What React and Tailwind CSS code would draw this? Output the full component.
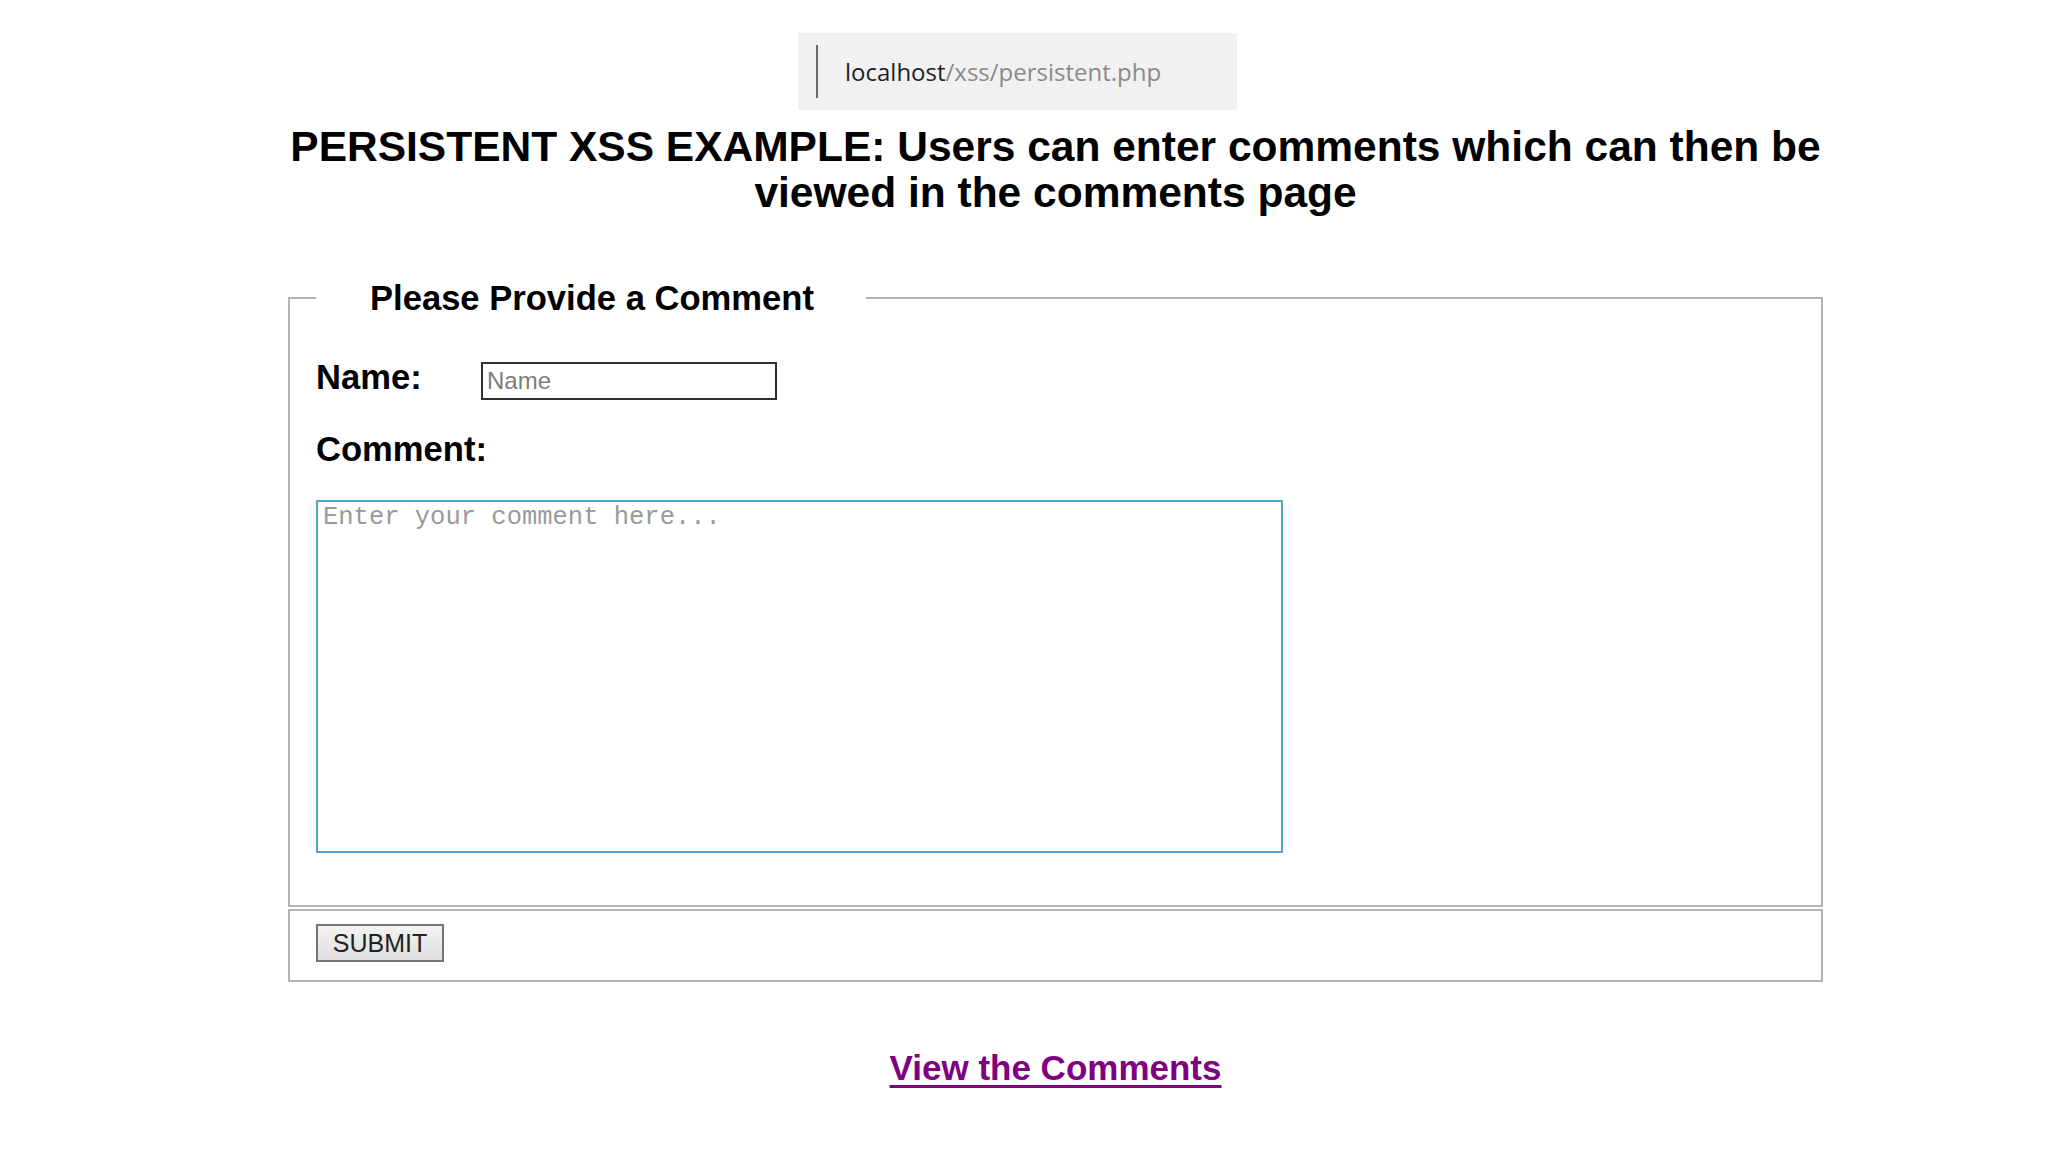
import { useState } from "react";

// Address bar strip shown above the page
const AddressBar = () => (
  <div className="ml-[510px] flex h-[77px] w-[439px] items-center bg-[#f1f1f1] pl-[18px]">
    <div className="h-[53px] w-[2px] bg-[#6b6b6b]" />
    <p className="ml-[27px] font-['Open_Sans',sans-serif] text-[24px] leading-none">
      <span className="text-[#1f1f1f]">localhost</span>
      <span className="text-[#8a8a8a]">/xss/persistent.php</span>
    </p>
  </div>
);

const App = () => {
  const [name, setName] = useState("");
  const [comment, setComment] = useState("");

  const handleSubmit = (e) => {
    e.preventDefault();
  };

  return (
    <div className="min-h-[1152px] bg-white pt-[33px] font-['Liberation_Sans',Arial,sans-serif] text-black">
      <div className="ml-[288px] w-[1535px]">
        <AddressBar />

        <h1 className="mt-[14px] text-center text-[42.5px] font-bold leading-[46px]">
          PERSISTENT XSS EXAMPLE: Users can enter comments which can then be
          viewed in the comments page
        </h1>

        <form onSubmit={handleSubmit} className="mt-[62px]">
          <fieldset className="border-2 border-[#b3b3b3] px-[26px] pb-[52px]">
            <legend className="pl-[54px] pr-[52px] text-[34.6px] font-bold leading-[40px]">
              Please Provide a Comment
            </legend>

            <div className="mt-[39px] flex items-start">
              <label htmlFor="name" className="w-[165px] text-[34.6px] font-bold leading-[40px]">
                Name:
              </label>
              <input
                id="name"
                type="text"
                placeholder="Name"
                value={name}
                onChange={(e) => setName(e.target.value)}
                className="mt-[5px] h-[38px] w-[296px] border-[2.5px] border-[#303030] bg-white px-[4px] text-[24px] text-black outline-none placeholder:text-[#7d7d7d]"
              />
            </div>

            <label htmlFor="comment" className="mt-[29px] block text-[34.6px] font-bold leading-[40px]">
              Comment:
            </label>

            <textarea
              id="comment"
              placeholder="Enter your comment here..."
              value={comment}
              onChange={(e) => setComment(e.target.value)}
              className="mt-[31px] block h-[353px] w-[967px] resize-none border-2 border-[#52a7d2] bg-white px-[5px] pt-[1px] font-['Liberation_Mono','Courier_New',monospace] text-[25.5px] leading-[30px] outline-none placeholder:text-[#9a9a9a]"
            />
          </fieldset>

          <div className="mt-[2px] border-2 border-[#b3b3b3] px-[26px] pb-[18px] pt-[13px]">
            <button
              type="submit"
              className="h-[38px] w-[128px] border-2 border-[#747474] bg-gradient-to-b from-[#f3f3f3] to-[#dedede] text-[25px] leading-none text-[#222]"
            >
              SUBMIT
            </button>
          </div>
        </form>

        <div className="mt-[66px] text-center">
          <a
            href="#"
            className="text-[35px] font-bold leading-[40px] text-[#800080] underline decoration-[3px] underline-offset-[5px]"
          >
            View the Comments
          </a>
        </div>
      </div>
    </div>
  );
};

export default App;
